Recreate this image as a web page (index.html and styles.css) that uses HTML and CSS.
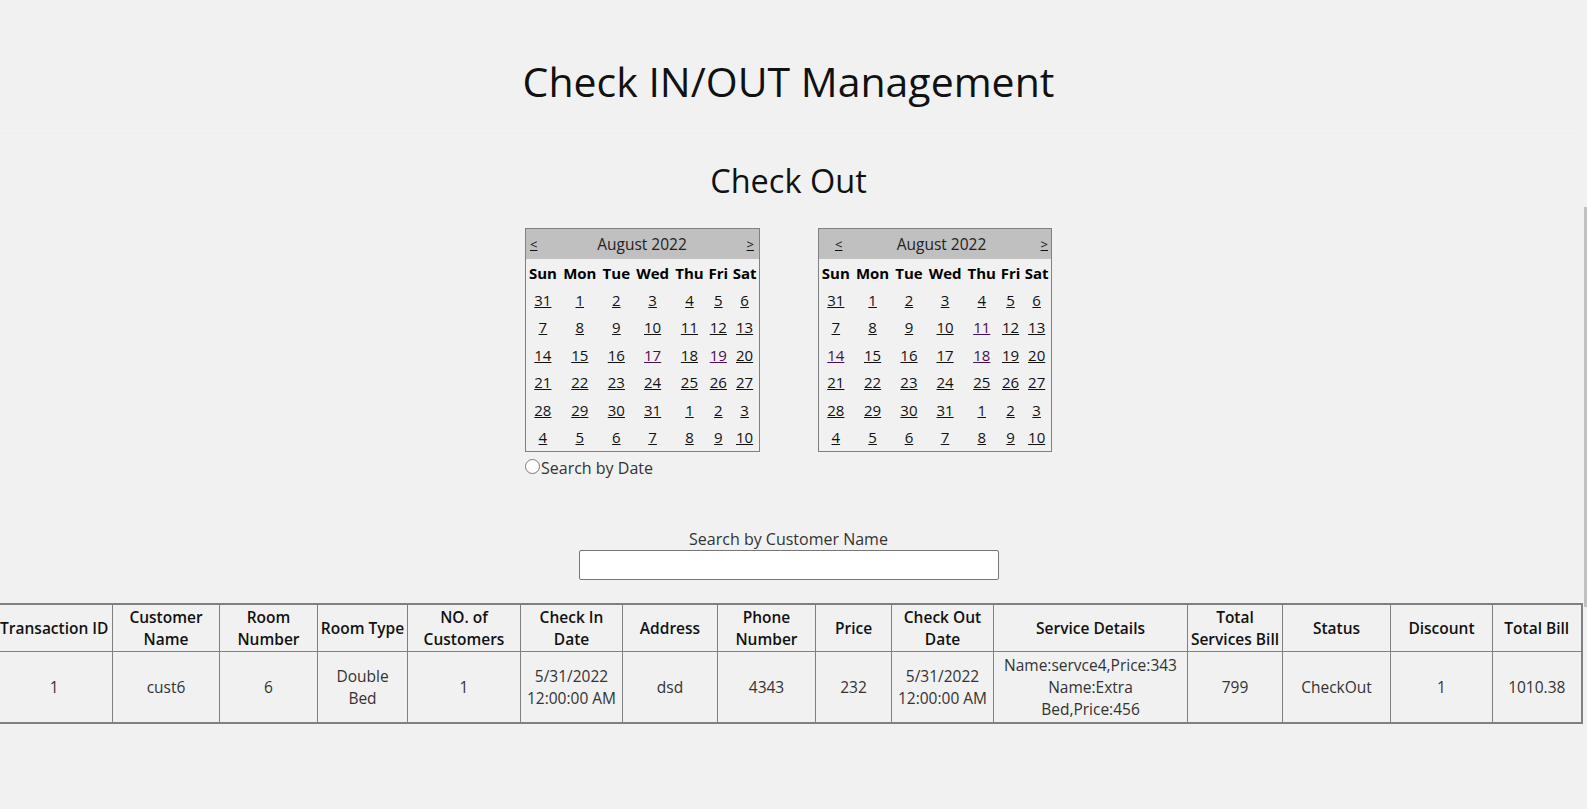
FILE: index.html
```html
<!DOCTYPE html>
<html>
<head>
<meta charset="utf-8">
<title>Check IN/OUT Management</title>
<link rel="stylesheet" href="styles.css">
</head>
<body>
<div class="page">
  <header class="top">
    <h1 class="title">Check IN/OUT Management</h1>
  </header>
  <section class="checkout">
    <h2 class="subtitle">Check Out</h2>
    <div class="dates">
      <div class="cal-row">
        <table class="cal">
          <tr class="cal-head"><td colspan="7"><div class="cal-bar"><a class="nav">&lt;</a><span class="month">August 2022</span><a class="nav">&gt;</a></div></td></tr>
          <tr class="cal-days"><th>Sun</th><th>Mon</th><th>Tue</th><th>Wed</th><th>Thu</th><th>Fri</th><th>Sat</th></tr>
          <tr><td><a>31</a></td><td><a>1</a></td><td><a>2</a></td><td><a>3</a></td><td><a>4</a></td><td><a>5</a></td><td><a>6</a></td></tr>
          <tr><td><a>7</a></td><td><a>8</a></td><td><a>9</a></td><td><a>10</a></td><td><a>11</a></td><td><a>12</a></td><td><a>13</a></td></tr>
          <tr><td><a>14</a></td><td><a>15</a></td><td><a>16</a></td><td><a class="seen">17</a></td><td><a>18</a></td><td><a class="seen">19</a></td><td><a>20</a></td></tr>
          <tr><td><a>21</a></td><td><a>22</a></td><td><a>23</a></td><td><a>24</a></td><td><a>25</a></td><td><a>26</a></td><td><a>27</a></td></tr>
          <tr><td><a>28</a></td><td><a>29</a></td><td><a>30</a></td><td><a>31</a></td><td><a>1</a></td><td><a>2</a></td><td><a>3</a></td></tr>
          <tr><td><a>4</a></td><td><a>5</a></td><td><a>6</a></td><td><a>7</a></td><td><a>8</a></td><td><a>9</a></td><td><a>10</a></td></tr>
        </table>
        <table class="cal cal-second">
          <tr class="cal-head"><td colspan="7"><div class="cal-bar"><a class="nav">&lt;</a><span class="month">August 2022</span><a class="nav">&gt;</a></div></td></tr>
          <tr class="cal-days"><th>Sun</th><th>Mon</th><th>Tue</th><th>Wed</th><th>Thu</th><th>Fri</th><th>Sat</th></tr>
          <tr><td><a>31</a></td><td><a>1</a></td><td><a>2</a></td><td><a>3</a></td><td><a>4</a></td><td><a>5</a></td><td><a>6</a></td></tr>
          <tr><td><a>7</a></td><td><a>8</a></td><td><a>9</a></td><td><a>10</a></td><td><a class="seen">11</a></td><td><a>12</a></td><td><a>13</a></td></tr>
          <tr><td><a class="seen">14</a></td><td><a>15</a></td><td><a>16</a></td><td><a>17</a></td><td><a class="seen">18</a></td><td><a>19</a></td><td><a>20</a></td></tr>
          <tr><td><a>21</a></td><td><a>22</a></td><td><a>23</a></td><td><a>24</a></td><td><a>25</a></td><td><a>26</a></td><td><a>27</a></td></tr>
          <tr><td><a>28</a></td><td><a>29</a></td><td><a>30</a></td><td><a>31</a></td><td><a>1</a></td><td><a>2</a></td><td><a>3</a></td></tr>
          <tr><td><a>4</a></td><td><a>5</a></td><td><a>6</a></td><td><a>7</a></td><td><a>8</a></td><td><a>9</a></td><td><a>10</a></td></tr>
        </table>
      </div>
      <label class="radio-row"><input class="radio" type="radio" name="mode">Search by Date</label>
    </div>
    <div class="search">
      <label class="search-label" for="cname">Search by Customer Name</label>
      <input class="search-input" id="cname" type="text">
    </div>
    <div class="grid-wrap">
      <table class="grid">
        <colgroup>
          <col class="c1"><col class="c2"><col class="c3"><col class="c4"><col class="c5">
          <col class="c6"><col class="c7"><col class="c8"><col class="c9"><col class="c10">
          <col class="c11"><col class="c12"><col class="c13"><col class="c14"><col class="c15">
        </colgroup>
        <tr class="grid-head">
          <th>Transaction ID</th><th>Customer Name</th><th>Room Number</th><th>Room Type</th><th>NO. of Customers</th>
          <th>Check In Date</th><th>Address</th><th>Phone Number</th><th>Price</th><th>Check Out Date</th>
          <th>Service Details</th><th>Total Services Bill</th><th>Status</th><th>Discount</th><th>Total Bill</th>
        </tr>
        <tr class="grid-row">
          <td>1</td><td>cust6</td><td>6</td><td class="tight">Double Bed</td><td>1</td>
          <td>5/31/2022 12:00:00 AM</td><td>dsd</td><td>4343</td><td>232</td><td>5/31/2022 12:00:00 AM</td>
          <td class="tight">Name:servce4,Price:343<br>Name:Extra Bed,Price:456</td><td>799</td><td>CheckOut</td><td>1</td><td>1010.38</td>
        </tr>
      </table>
    </div>
  </section>
</div>
<div class="scroll-thumb"></div>
</body>
</html>
```
FILE: styles.css
```css
html, body {
  margin: 0;
  background: #f1f1f1;
}
body {
  font-family: "Open Sans", "DejaVu Sans", sans-serif;
  color: #222;
}
.page {
  width: 1577px;
}
.top {
  box-sizing: border-box;
  height: 134px;
  padding-top: 56px;
  border-bottom: 1px solid #eeeeee;
}
.title {
  margin: 0;
  font-size: 41px;
  font-weight: 400;
  line-height: 50px;
  text-align: center;
  color: #111;
}
.subtitle {
  margin: 29px 0 29px;
  font-size: 32.5px;
  font-weight: 400;
  line-height: 36px;
  text-align: center;
  color: #111;
}
.dates {
  width: 527px;
  margin: 0 auto;
}
.cal-row {
  display: flex;
  gap: 58px;
}
.cal {
  width: 235px;
  height: 224px;
  border: 1px solid #808080;
  border-collapse: collapse;
  font-size: 15px;
  color: #111;
}
.cal-second {
  width: 234px;
}
.cal td, .cal th {
  padding: 0;
  text-align: center;
}
.cal-head td {
  background: #c0c0c0;
  height: 30px;
}
.cal-bar {
  display: flex;
  align-items: center;
  justify-content: space-between;
  padding: 0 5px 0 4px;
  font-size: 15.5px;
}
.cal-second .cal-bar {
  padding: 0 3px 0 16px;
}
.nav {
  text-decoration: underline;
  color: #222;
  font-size: 13px;
}
.month {
  color: #222;
}
.cal-days th {
  font-weight: 700;
  height: 27px;
  color: #000;
}
.cal a {
  text-decoration: underline;
  color: #111;
}
.cal a.seen {
  color: #4a0d4f;
}
.radio-row {
  display: flex;
  align-items: center;
  margin-top: 6px;
  font-size: 16px;
  line-height: 20px;
  color: #333;
}
.radio {
  width: 15px;
  height: 15px;
  margin: -3px 1px 0 0;
}
.search {
  margin-top: 51px;
  display: flex;
  flex-direction: column;
  align-items: center;
}
.search-label {
  font-size: 16px;
  line-height: 20px;
  color: #333;
}
.search-input {
  box-sizing: border-box;
  width: 420px;
  height: 30px;
  margin-top: 1px;
  border: 1px solid #767676;
  border-radius: 2px;
  background: #fff;
}
.grid-wrap {
  display: flex;
  justify-content: center;
  margin-top: 23px;
}
.grid {
  flex: none;
  width: 1586px;
  table-layout: fixed;
  border-collapse: collapse;
  border: 2px solid #808080;
  font-size: 15.5px;
  line-height: 22px;
}
.grid th, .grid td {
  border: 1px solid #808080;
  text-align: center;
}
.grid th {
  padding: 1px 2px;
  font-weight: 600;
  color: #111;
}
.grid td {
  padding: 2px 2px;
  color: #333;
}
.grid td.tight {
  padding: 2px 6px;
}
.c1 { width: 117px; }
.c2 { width: 107px; }
.c3 { width: 98px; }
.c4 { width: 90px; }
.c5 { width: 113px; }
.c6 { width: 102px; }
.c7 { width: 95px; }
.c8 { width: 98px; }
.c9 { width: 76px; }
.c10 { width: 102px; }
.c11 { width: 194px; }
.c12 { width: 95px; }
.c13 { width: 108px; }
.c14 { width: 102px; }
.c15 { width: 89px; }
.scroll-thumb {
  position: fixed;
  right: 0;
  top: 207px;
  width: 3px;
  height: 400px;
  background: #c1c1c1;
}
```
